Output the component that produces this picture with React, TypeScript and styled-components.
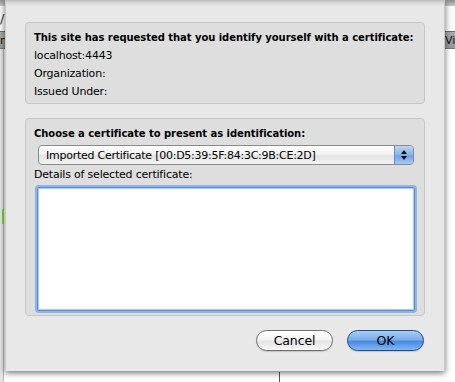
import React from "react"
import styled, { createGlobalStyle } from "styled-components"

const Global = createGlobalStyle`
  html, body {
    margin: 0;
    padding: 0;
    background: #ffffff;
  }
  body {
    font-family: "DejaVu Sans", "Liberation Sans", sans-serif;
    font-size: 11px;
    letter-spacing: -0.2px;
    color: #000;
  }
`

const Page = styled.div`
  position: relative;
  width: 455px;
  height: 382px;
  overflow: hidden;
  background: #ffffff;
`

/* the browser window behind the sheet */
const Backdrop = styled.div`
  display: flex;
  flex-direction: column;
  height: 100%;
`

const TitleShade = styled.div`
  height: 6px;
  background: linear-gradient(#8e8e8e, #c8c8c8);
`

const UrlRow = styled.div`
  height: 25px;
  display: flex;
  align-items: center;
  font-size: 13px;
  color: #333;
  background: #fafafa;
`

const TabBar = styled.div`
  height: 16px;
  display: flex;
  justify-content: space-between;
  align-items: center;
  background: linear-gradient(#a9a9a9, #999);
  border-top: 1px solid #6a6a6a;
  border-bottom: 1px solid #777;
  font-size: 11px;
  color: #111;
`

const Content = styled.div`
  flex: 1;
  display: flex;
  justify-content: space-between;
  background: #fff;
`

const LeftGutter = styled.div`
  width: 3px;
  background: #e4e4e4;
  border-right: 1px solid #b9b9b9;
  padding-top: 160px;
`

const GreenMark = styled.div`
  width: 2px;
  height: 15px;
  margin-left: 2px;
  background: #6ee02c;
`

const BottomLine = styled.div`
  position: absolute;
  left: 279px;
  top: 372px;
  width: 1px;
  height: 10px;
  background: #555;
`

const Sheet = styled.div`
  position: absolute;
  left: 5px;
  top: 0;
  width: 440px;
  height: 371px;
  box-sizing: border-box;
  background: #e8e8e8;
  border-left: 1px solid #c9c9c9;
  border-right: 1px solid #c9c9c9;
  box-shadow: 0 2px 6px rgba(0, 0, 0, 0.55), inset 0 5px 4px -3px rgba(0, 0, 0, 0.22);
  padding: 22px 19px 0 19px;
  display: flex;
  flex-direction: column;
`

const Group = styled.div<{ $h: number }>`
  height: ${(p) => p.$h}px;
  box-sizing: border-box;
  background: #dedede;
  border: 1px solid #c6c6c6;
  border-radius: 4px;
  padding: 6px 8px 0 8px;
  display: flex;
  flex-direction: column;
`

const Title = styled.div`
  font-weight: bold;
  font-size: 10px;
  letter-spacing: -0.05px;
  height: 18px;
  line-height: 18px;
  white-space: nowrap;
`

const Line = styled.div`
  height: 18px;
  line-height: 18px;
  white-space: nowrap;
`

const Select = styled.div`
  margin: 2px 0 0 4px;
  width: 376px;
  height: 20px;
  box-sizing: border-box;
  border: 1px solid #8a8a8a;
  border-radius: 4px;
  background: linear-gradient(#ffffff, #f2f2f2 45%, #e2e2e2 55%, #f4f4f4);
  display: flex;
  align-items: center;
  overflow: hidden;
`

const SelectText = styled.div`
  flex: 1;
  padding-left: 7px;
  letter-spacing: -0.25px;
  white-space: nowrap;
`

const Stepper = styled.div`
  width: 18px;
  height: 100%;
  border-left: 1px solid #6b8cc0;
  background: linear-gradient(#bcd5f4, #8db7ec 45%, #6ea3e6 55%, #a6ccf5);
  display: flex;
  align-items: center;
  justify-content: center;
`

const Details = styled.div`
  height: 18px;
  line-height: 18px;
  margin-top: 1px;
`

const TextArea = styled.div`
  margin: 3px 0 0 3px;
  width: 378px;
  height: 124px;
  box-sizing: border-box;
  background: #fff;
  border: 1px solid #5f8ccb;
  border-radius: 2px;
  box-shadow: 0 0 0 2px #8eb3e6, inset 0 0 1px 1px #a9c6ee;
`

const Buttons = styled.div`
  display: flex;
  justify-content: flex-end;
  gap: 14px;
  margin-top: 14px;
  padding-right: 1px;
`

const Button = styled.button<{ $primary?: boolean }>`
  width: 77px;
  height: 21px;
  box-sizing: border-box;
  border-radius: 11px;
  font-family: "DejaVu Sans", "Liberation Sans", sans-serif;
  font-size: 12.5px;
  letter-spacing: -0.1px;
  color: #000;
  padding: 0;
  border: 1px solid ${(p) => (p.$primary ? "#27478a" : "#6e6e6e")};
  background: ${(p) =>
    p.$primary
      ? "linear-gradient(#a9cdf6, #78aeea 45%, #4a8ae0 55%, #7fb9f2)"
      : "linear-gradient(#ffffff, #f4f4f4 45%, #e4e4e4 55%, #f8f8f8)"};
  box-shadow: 0 1px 1px rgba(0, 0, 0, 0.15);
`

function StepperArrows() {
  return (
    <svg width="8" height="12" viewBox="0 0 8 12">
      <path d="M4 1 L7 5 L1 5 Z" fill="#111" />
      <path d="M4 11 L7 7 L1 7 Z" fill="#111" />
    </svg>
  )
}

export default function App() {
  return (
    <>
      <Global />
      <Page>
        <Backdrop>
          <TitleShade />
          <UrlRow>/</UrlRow>
          <TabBar>
            <span>nt</span>
            <span>Vi</span>
          </TabBar>
          <Content>
            <LeftGutter>
              <GreenMark />
            </LeftGutter>
          </Content>
        </Backdrop>
        <BottomLine />
        <Sheet>
          <Group $h={82}>
            <Title>This site has requested that you identify yourself with a certificate:</Title>
            <Line>localhost:4443</Line>
            <Line>Organization:</Line>
            <Line>Issued Under:</Line>
          </Group>
          <div style={{ height: 14 }} />
          <Group $h={198}>
            <Title>Choose a certificate to present as identification:</Title>
            <Select>
              <SelectText>Imported Certificate [00:D5:39:5F:84:3C:9B:CE:2D]</SelectText>
              <Stepper>
                <StepperArrows />
              </Stepper>
            </Select>
            <Details>Details of selected certificate:</Details>
            <TextArea />
          </Group>
          <Buttons>
            <Button>Cancel</Button>
            <Button $primary>OK</Button>
          </Buttons>
        </Sheet>
      </Page>
    </>
  )
}
